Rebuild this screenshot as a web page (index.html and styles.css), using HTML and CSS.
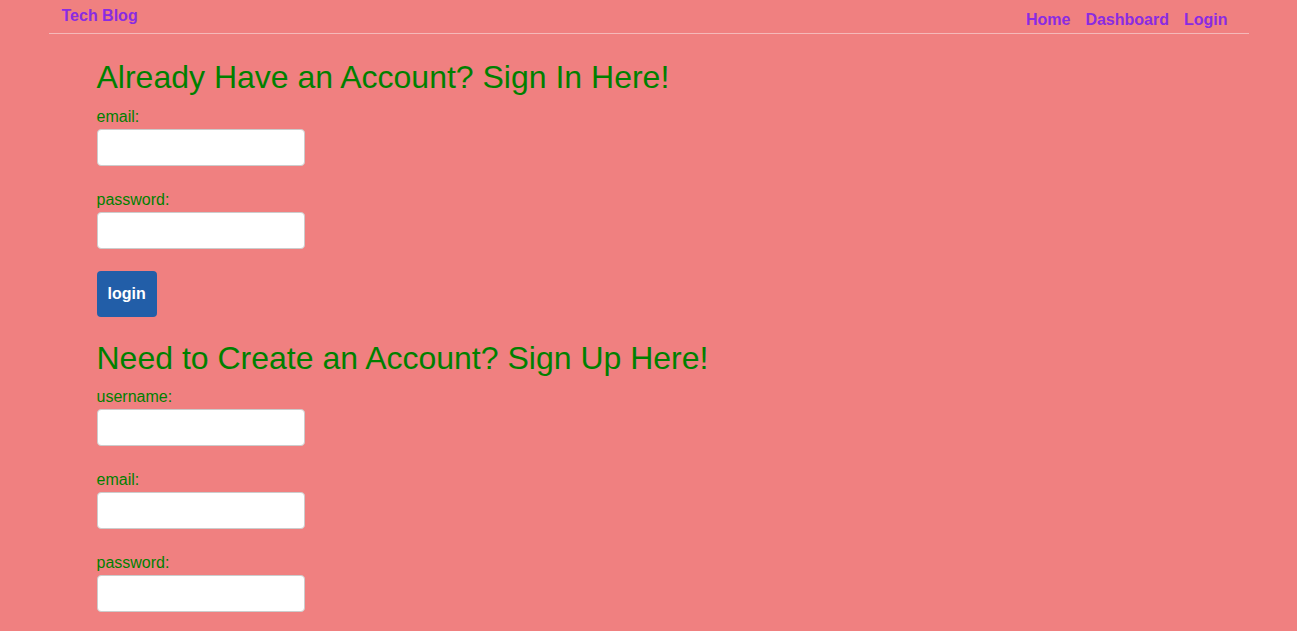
FILE: index.html
```html
<!DOCTYPE html>
<html lang="en">
<head>
<meta charset="utf-8">
<title>Tech Blog</title>
<link rel="stylesheet" href="styles.css">
</head>
<body>
<header class="site-header">
  <a class="brand" href="#">Tech Blog</a>
  <nav class="nav">
    <a href="#">Home</a>
    <a href="#">Dashboard</a>
    <a href="#">Login</a>
  </nav>
</header>
<main class="main">
  <h2 class="title title-first">Already Have an Account? Sign In Here!</h2>
  <form class="form">
    <div class="group">
      <label class="label" for="login-email">email:</label>
      <input class="input" id="login-email" type="text">
    </div>
    <div class="group">
      <label class="label" for="login-password">password:</label>
      <input class="input" id="login-password" type="password">
    </div>
    <button class="btn" type="button">login</button>
  </form>
  <h2 class="title title-second">Need to Create an Account? Sign Up Here!</h2>
  <form class="form">
    <div class="group">
      <label class="label" for="signup-username">username:</label>
      <input class="input" id="signup-username" type="text">
    </div>
    <div class="group">
      <label class="label" for="signup-email">email:</label>
      <input class="input" id="signup-email" type="text">
    </div>
    <div class="group">
      <label class="label" for="signup-password">password:</label>
      <input class="input" id="signup-password" type="password">
    </div>
  </form>
</main>
</body>
</html>
```
FILE: styles.css
```css
html, body {
  margin: 0;
  padding: 0;
}
body {
  background: #f08080;
  font-family: "Liberation Sans", Arial, sans-serif;
  font-size: 16px;
  color: #008000;
  overflow: hidden;
}
.site-header {
  width: 1200px;
  height: 33px;
  margin: 0 auto;
  border-bottom: 1px solid #f5b9b9;
  display: flex;
  justify-content: space-between;
  align-items: flex-start;
  box-sizing: content-box;
}
.brand {
  color: #8a2be2;
  font-weight: bold;
  text-decoration: none;
  line-height: 18px;
  padding-top: 7px;
  margin-left: 13px;
}
.nav {
  display: flex;
  gap: 15px;
  padding-top: 11px;
  margin-right: 21px;
}
.nav a {
  color: #8a2be2;
  font-weight: bold;
  text-decoration: none;
  line-height: 18px;
}
.main {
  width: 1200px;
  margin: 0 auto;
  padding: 0 48px;
  box-sizing: border-box;
}
.title {
  font-size: 32px;
  font-weight: normal;
  line-height: 37px;
  margin: 0;
}
.title-first {
  margin-top: 25px;
  margin-bottom: 9px;
}
.title-second {
  margin-top: 23px;
  margin-bottom: 8px;
}
.form {
  display: flex;
  flex-direction: column;
  align-items: flex-start;
  margin: 0;
}
.group {
  display: flex;
  flex-direction: column;
  align-items: flex-start;
  gap: 2px;
  margin-bottom: 22px;
}
.label {
  line-height: 20px;
  padding-top: 2px;
}
.input {
  width: 208px;
  height: 37px;
  box-sizing: border-box;
  border: 1px solid #cccccc;
  border-radius: 4px;
  background: #ffffff;
  margin: 0;
  padding: 6px 12px;
  font-family: inherit;
  font-size: 16px;
}
.btn {
  background: #225ea8;
  color: #ffffff;
  border: none;
  border-radius: 4px;
  font-family: inherit;
  font-size: 16px;
  font-weight: bold;
  line-height: 18px;
  padding: 14px 11px;
  width: 60px;
  height: 46px;
  margin: 0;
}
```
